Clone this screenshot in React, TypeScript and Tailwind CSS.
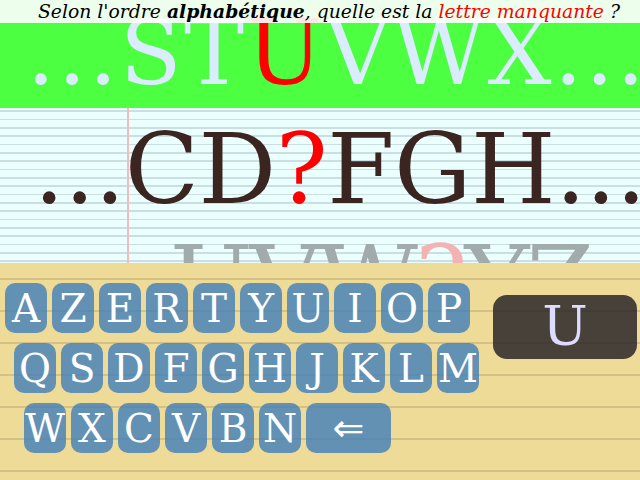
import React from 'react'

const rows: string[][] = [
    ['A', 'Z', 'E', 'R', 'T', 'Y', 'U', 'I', 'O', 'P'],
    ['Q', 'S', 'D', 'F', 'G', 'H', 'J', 'K', 'L', 'M'],
    ['W', 'X', 'C', 'V', 'B', 'N'],
]

const rowPad = ['pl-0', 'pl-[9px]', 'pl-[19px]']

const Key = ({ label, wide }: { label: string; wide?: boolean }) => (
    <div
        className={`${wide ? 'w-[85px] font-["DejaVu_Sans"] text-[38px]' : 'w-[42px] text-[39px]'} h-[50px] rounded-[10px] bg-[#407ebc]/80 text-white flex items-center justify-center leading-none`}
    >
        {label}
    </div>
)

export default function App() {
    return (
        <div className="w-[640px] h-[480px] flex flex-col overflow-hidden font-['DejaVu_Serif',serif]">
            {/* bandeau vert avec la réponse précédente */}
            <div className="relative h-[108px] shrink-0 bg-[#4cff40] overflow-hidden flex justify-center pl-[34px]">
                <div className="pt-[8px] text-[90px] tracking-[2.5px] leading-none whitespace-nowrap text-[#dcecff]">
                    ...ST<span className="text-[#ff0000]">U</span>VWX...
                </div>
                <div className="absolute inset-x-0 top-0 h-[23px] pl-[18px] bg-white/90 text-center text-[18.8px] leading-[23px] italic text-black whitespace-nowrap">
                    Selon l'ordre <b>alphabétique</b>, quelle est la <span className="text-[#ff0000]">lettre manquante</span> ?
                </div>
            </div>

            {/* feuille lignée */}
            <div className="relative h-[155px] shrink-0 overflow-hidden bg-[#ecffff] bg-[repeating-linear-gradient(180deg,transparent_0px,transparent_2.5px,#c9dfe1_2.5px,#c9dfe1_4px,transparent_4px,transparent_8.333px)]">
                <div className="absolute left-[127px] top-0 bottom-0 w-[2px] bg-[#f2bcbc]" />
                <div className="relative flex justify-center pl-[40px] pt-[13px] text-[97px] tracking-[-0.5px] leading-none whitespace-nowrap text-[#3b2521]">
                    ...CD<span className="text-[#ff0000]">?</span>FGH...
                </div>
                <div className="relative mt-[14px] pl-[170px] text-[98px] tracking-[-3px] leading-none whitespace-nowrap text-[#a2abab]">
                    UVW<span className="text-[#f3b3b3]">?</span>YZ
                </div>
            </div>

            {/* clavier */}
            <div className="flex-1 flex justify-between bg-[#eedb98] bg-[repeating-linear-gradient(180deg,transparent_0px,transparent_15px,#d5c184_15px,#d5c184_17px,transparent_17px,transparent_32px)]">
                <div className="flex flex-col gap-[10px] pt-[20px] pl-[5px]">
                    {rows.map((row, i) => (
                        <div key={i} className={`flex gap-[5px] ${rowPad[i]}`}>
                            {row.map((l) => (
                                <Key key={l} label={l} />
                            ))}
                            {i === 2 && <Key label="⇐" wide />}
                        </div>
                    ))}
                </div>
                <div className="mt-[32px] mr-[3px] w-[144px] h-[64px] rounded-[14px] bg-[#2a2629]/85 flex items-center justify-center text-[54px] leading-none text-[#dcdcff]">
                    U
                </div>
            </div>
        </div>
    )
}
